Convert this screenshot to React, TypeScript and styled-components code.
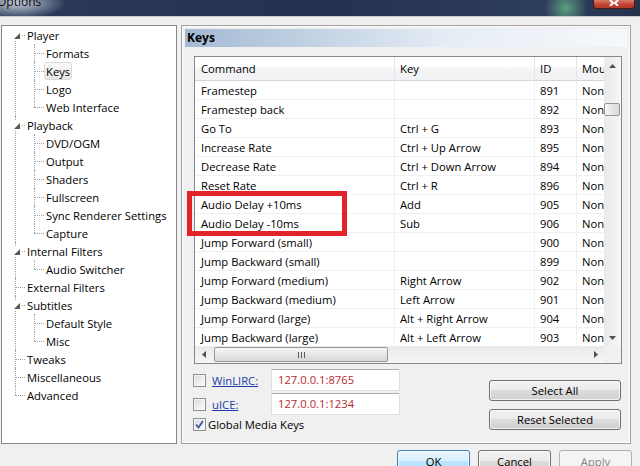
import React from "react";
import styled, { createGlobalStyle } from "styled-components";

// Win7 "Options" dialog, Keys page

const UI_FONT = `"Open Sans", "Noto Sans", sans-serif`;

const GlobalStyle = createGlobalStyle`
  html, body {
    margin: 0;
    padding: 0;
  }
  body {
    width: 640px;
    height: 466px;
    overflow: hidden;
    background: #f0f0f0;
    font-family: ${UI_FONT};
    font-size: 11.25px;
    color: #000;
  }
  * {
    box-sizing: border-box;
  }
`;

interface TreeNode {
  label: string;
  children?: TreeNode[];
  selected?: boolean;
}

const leaf = (label: string, selected = false): TreeNode => ({ label, selected });

const TREE: TreeNode[] = [
  { label: "Player", children: [leaf("Formats"), leaf("Keys", true), leaf("Logo"), leaf("Web Interface")] },
  {
    label: "Playback",
    children: [leaf("DVD/OGM"), leaf("Output"), leaf("Shaders"), leaf("Fullscreen"), leaf("Sync Renderer Settings"), leaf("Capture")],
  },
  { label: "Internal Filters", children: [leaf("Audio Switcher")] },
  leaf("External Filters"),
  { label: "Subtitles", children: [leaf("Default Style"), leaf("Misc")] },
  leaf("Tweaks"),
  leaf("Miscellaneous"),
  leaf("Advanced"),
];

const COLUMNS = [
  { title: "Command", width: 200 },
  { title: "Key", width: 140 },
  { title: "ID", width: 42 },
  { title: "Mouse Windowed", width: 110 },
];

const KEYS: [string, string, string][] = [
  ["Framestep", "", "891"],
  ["Framestep back", "", "892"],
  ["Go To", "Ctrl + G", "893"],
  ["Increase Rate", "Ctrl + Up Arrow", "895"],
  ["Decrease Rate", "Ctrl + Down Arrow", "894"],
  ["Reset Rate", "Ctrl + R", "896"],
  ["Audio Delay +10ms", "Add", "905"],
  ["Audio Delay -10ms", "Sub", "906"],
  ["Jump Forward (small)", "", "900"],
  ["Jump Backward (small)", "", "899"],
  ["Jump Forward (medium)", "Right Arrow", "902"],
  ["Jump Backward (medium)", "Left Arrow", "901"],
  ["Jump Forward (large)", "Alt + Right Arrow", "904"],
  ["Jump Backward (large)", "Alt + Left Arrow", "903"],
];

const Tree: React.FC<{ nodes: TreeNode[]; level: number }> = ({ nodes, level }) => (
  <TreeList>
    {nodes.map((node, i) => (
      <TreeItem
        key={node.label}
        $level={level}
        $first={level === 0 && i === 0}
        $last={i === nodes.length - 1}
      >
        <TreeRow $level={level}>
          {node.children && (
            <Expander $level={level}>
              <svg width="6" height="6" viewBox="0 0 6 6">
                <polygon points="6,0 6,6 0,6" fill="#595959" />
              </svg>
            </Expander>
          )}
          <TreeLabel $selected={node.selected}>{node.label}</TreeLabel>
        </TreeRow>
        {node.children && <Tree nodes={node.children} level={level + 1} />}
      </TreeItem>
    ))}
  </TreeList>
);

const Arrow: React.FC<{ dir: "up" | "down" | "left" | "right" }> = ({ dir }) => {
  const pts = {
    up: "0,4 7,4 3.5,0",
    down: "0,0 7,0 3.5,4",
    left: "4,0 4,7 0,3.5",
    right: "0,0 0,7 4,3.5",
  }[dir];
  const vertical = dir === "up" || dir === "down";
  return (
    <svg width={vertical ? 7 : 4} height={vertical ? 4 : 7} viewBox={vertical ? "0 0 7 4" : "0 0 4 7"}>
      <polygon points={pts} fill="#4f4f4f" />
    </svg>
  );
};

const Checkbox: React.FC<{ checked?: boolean }> = ({ checked }) => (
  <CheckBox>
    {checked && (
      <svg width="9" height="9" viewBox="0 0 9 9">
        <path d="M1 4.5 L3.5 7.5 L8 1" fill="none" stroke="#3f5794" strokeWidth="1.8" />
      </svg>
    )}
  </CheckBox>
);

const App: React.FC = () => {
  return (
    <Window>
      <GlobalStyle />
      <TitleBar>
        <TitleText>Options</TitleText>
        <CloseButton>
          <svg width="12" height="6" viewBox="0 0 12 6">
            <path d="M2 0 L5 3 L2 6 M10 0 L7 3 L10 6" fill="none" stroke="#fff" strokeWidth="2" />
          </svg>
        </CloseButton>
      </TitleBar>

      <Frame>
        <Main>
          <TreePanel>
            <Tree nodes={TREE} level={0} />
          </TreePanel>

          <Page>
            <PageHeader>Keys</PageHeader>
            <PageBody>
              <ListView>
                <ListContent>
                  <HeaderRow>
                    {COLUMNS.map((c, i) => (
                      <HeaderCell key={c.title} $width={c.width} $first={i === 0}>
                        {c.title}
                      </HeaderCell>
                    ))}
                  </HeaderRow>
                  {KEYS.map(([cmd, key, id]) => (
                    <Row key={id}>
                      <Cell $width={COLUMNS[0].width} $first>{cmd}</Cell>
                      <Cell $width={COLUMNS[1].width}>{key}</Cell>
                      <Cell $width={COLUMNS[2].width}>{id}</Cell>
                      <Cell $width={COLUMNS[3].width}>None</Cell>
                    </Row>
                  ))}
                </ListContent>

                <VScroll>
                  <ScrollButton><Arrow dir="up" /></ScrollButton>
                  <VTrack>
                    <VThumb />
                  </VTrack>
                  <ScrollButton><Arrow dir="down" /></ScrollButton>
                </VScroll>

                <HScroll>
                  <ScrollButton><Arrow dir="left" /></ScrollButton>
                  <HTrack>
                    <HThumb>
                      <svg width="7" height="6" viewBox="0 0 7 6">
                        <rect x="0" y="0" width="1" height="6" fill="#5a5a5a" />
                        <rect x="3" y="0" width="1" height="6" fill="#5a5a5a" />
                        <rect x="6" y="0" width="1" height="6" fill="#5a5a5a" />
                      </svg>
                    </HThumb>
                  </HTrack>
                  <ScrollButton><Arrow dir="right" /></ScrollButton>
                </HScroll>

                <ScrollCorner />
              </ListView>

              <Controls>
                <Options>
                  <FieldRow>
                    <Checkbox />
                    <LinkLabel>WinLIRC:</LinkLabel>
                    <AddressBox>127.0.0.1:8765</AddressBox>
                  </FieldRow>
                  <FieldRow>
                    <Checkbox />
                    <LinkLabel>uICE:</LinkLabel>
                    <AddressBox>127.0.0.1:1234</AddressBox>
                  </FieldRow>
                  <CheckRow>
                    <Checkbox checked />
                    <span>Global Media Keys</span>
                  </CheckRow>
                </Options>
                <SideButtons>
                  <PushButton $width={132} $height={21}>Select All</PushButton>
                  <PushButton $width={132} $height={21}>Reset Selected</PushButton>
                </SideButtons>
              </Controls>
            </PageBody>

            <Highlight />
          </Page>
        </Main>

        <DialogButtons>
          <PushButton $width={73} $height={23} $variant="default">OK</PushButton>
          <PushButton $width={73} $height={23}>Cancel</PushButton>
          <PushButton $width={73} $height={23} $variant="disabled">Apply</PushButton>
        </DialogButtons>
      </Frame>
    </Window>
  );
};

const Window = styled.div`
  width: 640px;
  height: 466px;
  display: flex;
  flex-direction: column;
  overflow: hidden;
`;

const TitleBar = styled.div`
  flex: none;
  height: 17px;
  display: flex;
  align-items: flex-start;
  justify-content: space-between;
  overflow: hidden;
  border-bottom: 1px solid #c3cad4;
  background:
    radial-gradient(ellipse 48px 16px at 18px 3px, rgba(214, 220, 230, 0.9), rgba(214, 220, 230, 0) 100%),
    radial-gradient(ellipse 22px 22px at 566px 8px, rgba(110, 190, 140, 0.75), rgba(110, 190, 140, 0) 100%),
    linear-gradient(to right, #2a3a58 0%, #24324f 50%, #2d3d5c 85%, #25334f 100%);
`;

const TitleText = styled.div`
  margin: -6px 0 0 -3px;
  font-size: 12px;
  line-height: 16px;
  color: #0b0b0b;
`;

const CloseButton = styled.div`
  width: 42px;
  height: 9px;
  margin-right: 5px;
  border: 1px solid #4a1a18;
  border-top: none;
  border-radius: 0 0 4px 4px;
  background: linear-gradient(to bottom, #d97a6a, #c2412f 60%, #b5382b);
  display: flex;
  justify-content: center;
  align-items: flex-start;
  overflow: hidden;
`;

const Frame = styled.div`
  flex: 1;
  display: flex;
  flex-direction: column;
  background: #f0f0f0;
`;

const Main = styled.div`
  display: flex;
  gap: 4px;
  padding: 8px 0 0 1px;
`;

const TreePanel = styled.div`
  width: 176px;
  height: 419px;
  border: 1px solid #828790;
  background: #fff;
  overflow: hidden;
`;

const TreeList = styled.ul`
  list-style: none;
  margin: 0;
  padding: 0;
`;

const TreeItem = styled.li<{ $level: number; $first: boolean; $last: boolean }>`
  position: relative;

  &::before {
    content: "";
    position: absolute;
    left: ${(p) => 13 + p.$level * 19}px;
    top: ${(p) => (p.$first ? "9px" : "0")};
    ${(p) => (p.$last ? "height: 9px;" : "bottom: 0;")}
    border-left: 1px dotted #a0a0a0;
  }

  &::after {
    content: "";
    position: absolute;
    left: ${(p) => 13 + p.$level * 19}px;
    top: 9px;
    width: 10px;
    border-top: 1px dotted #a0a0a0;
  }
`;

const TreeRow = styled.div<{ $level: number }>`
  position: relative;
  height: 18px;
  padding-left: ${(p) => 23 + p.$level * 19}px;
  display: flex;
  align-items: center;
`;

const Expander = styled.span<{ $level: number }>`
  position: absolute;
  z-index: 1;
  left: ${(p) => 9 + p.$level * 19}px;
  top: 4px;
  width: 11px;
  height: 11px;
  background: #fff;
  display: flex;
  align-items: center;
  justify-content: center;
`;

const TreeLabel = styled.span<{ $selected?: boolean }>`
  position: relative;
  z-index: 1;
  height: 18px;
  padding: 1px 1px 0;
  line-height: 15px;
  border: 1px solid ${(p) => (p.$selected ? "#d9d9d9" : "transparent")};
  border-radius: 3px;
  background: ${(p) => (p.$selected ? "linear-gradient(to bottom, #fafafa, #e8e8e8)" : "transparent")};
  white-space: nowrap;
`;

const Page = styled.div`
  position: relative;
  width: 450px;
  height: 419px;
  padding: 3px;
  border: 1px solid #a0a0a0;
  box-shadow: inset 0 0 0 1px #fcfcfc;
  background: #f0f0f0;
`;

const PageHeader = styled.div`
  height: 18px;
  padding-left: 2px;
  line-height: 18px;
  font-weight: 700;
  font-size: 12px;
  background: linear-gradient(to right, #a3b9d3 0%, #c3d3e4 30%, #e6edf5 60%, #f6f8fb 100%);
`;

const PageBody = styled.div`
  padding: 9px 5px 0 9px;
`;

const ListView = styled.div`
  height: 308px;
  border: 1px solid #828790;
  background: #fff;
  display: grid;
  grid-template-columns: 1fr 17px;
  grid-template-rows: 1fr 17px;
  overflow: hidden;
`;

const ListContent = styled.div`
  overflow: hidden;
  min-width: 0;
  min-height: 0;
`;

const HeaderRow = styled.div`
  display: flex;
  height: 24px;
  border-bottom: 1px solid #d5d5d5;
  background: linear-gradient(to bottom, #ffffff 0%, #ffffff 45%, #f4f5f7 46%, #f1f2f4 100%);
`;

const HeaderCell = styled.div<{ $width: number; $first?: boolean }>`
  flex: none;
  width: ${(p) => p.$width}px;
  padding: 1px 0 0 ${(p) => (p.$first ? 6 : 5)}px;
  line-height: 22px;
  border-right: 1px solid #e3e6ea;
  white-space: nowrap;
  overflow: hidden;
`;

const Row = styled.div`
  display: flex;
  height: 19px;
  border-bottom: 1px solid #f0f0f0;
`;

const Cell = styled.div<{ $width: number; $first?: boolean }>`
  flex: none;
  width: ${(p) => p.$width}px;
  padding: 1px 0 0 ${(p) => (p.$first ? 6 : 5)}px;
  line-height: 17px;
  border-right: 1px solid #f0f0f0;
  white-space: nowrap;
  overflow: hidden;
`;

const VScroll = styled.div`
  display: flex;
  flex-direction: column;
  background: linear-gradient(to right, #e9e9e9, #f6f6f6);
`;

const HScroll = styled.div`
  display: flex;
  background: linear-gradient(to bottom, #e9e9e9, #f6f6f6);
`;

const ScrollButton = styled.div`
  flex: none;
  width: 17px;
  height: 17px;
  display: flex;
  align-items: center;
  justify-content: center;
`;

const VTrack = styled.div`
  flex: 1;
  padding: 29px 0 0 0;
`;

const VThumb = styled.div`
  width: 16px;
  height: 13px;
  border: 1px solid #979797;
  border-radius: 2px;
  background: linear-gradient(to right, #f7f7f7, #e6e6e6 50%, #dcdcdc);
`;

const HTrack = styled.div`
  flex: 1;
  padding: 1px 0 0 2px;
`;

const HThumb = styled.div`
  width: 174px;
  height: 15px;
  border: 1px solid #979797;
  border-radius: 2px;
  background: linear-gradient(to bottom, #f7f7f7, #e6e6e6 50%, #d8d8d8);
  display: flex;
  align-items: center;
  justify-content: center;
`;

const ScrollCorner = styled.div`
  background: #f0f0f0;
`;

const Controls = styled.div`
  margin-top: 5px;
  display: flex;
  justify-content: space-between;
  align-items: flex-start;
`;

const Options = styled.div`
  display: flex;
  flex-direction: column;
  gap: 2px;
  margin-left: -1px;
`;

const FieldRow = styled.div`
  display: flex;
  align-items: center;
  height: 22px;
`;

const CheckRow = styled.div`
  display: flex;
  align-items: center;
  gap: 2px;
  height: 17px;
  margin-top: -1px;
`;

const CheckBox = styled.span`
  flex: none;
  width: 13px;
  height: 13px;
  border: 1px solid #8e8f8f;
  background: linear-gradient(135deg, #d6d8dc 0%, #f0f0f0 60%, #fbfbfb 100%);
  box-shadow: inset 0 0 0 1px #f6f6f6;
  display: flex;
  align-items: center;
  justify-content: center;
`;

const LinkLabel = styled.span`
  width: 59px;
  margin-left: 6px;
  color: #1a3aa8;
  text-decoration: underline;
`;

const AddressBox = styled.div`
  width: 129px;
  height: 22px;
  padding-left: 6px;
  line-height: 20px;
  border: 1px solid #dbdfe6;
  border-top-color: #abadb3;
  border-radius: 2px;
  background: #fff;
  color: #b8282e;
`;

const SideButtons = styled.div`
  margin-top: 11px;
  display: flex;
  flex-direction: column;
  gap: 8px;
  margin-right: 1px;
`;

const PushButton = styled.div<{ $width: number; $height: number; $variant?: "default" | "disabled" }>`
  flex: none;
  width: ${(p) => p.$width}px;
  height: ${(p) => p.$height}px;
  line-height: ${(p) => p.$height - 2}px;
  text-align: center;
  border-radius: 3px;
  border: 1px solid
    ${(p) => (p.$variant === "default" ? "#3c7fb1" : p.$variant === "disabled" ? "#adb2b5" : "#707070")};
  color: ${(p) => (p.$variant === "disabled" ? "#838383" : "#000")};
  background: ${(p) =>
    p.$variant === "default"
      ? "linear-gradient(to bottom, #eaf6fd 0%, #d9f0fc 45%, #bee6fd 50%, #a7d9f5 100%)"
      : p.$variant === "disabled"
      ? "#f4f4f4"
      : "linear-gradient(to bottom, #f2f2f2 0%, #ebebeb 45%, #dddddd 50%, #cfcfcf 100%)"};
  box-shadow: inset 0 0 0 1px ${(p) => (p.$variant === "disabled" ? "#f4f4f4" : "rgba(255,255,255,0.7)")};
`;

const DialogButtons = styled.div`
  display: flex;
  justify-content: flex-end;
  gap: 8px;
  padding-right: 8px;
  margin-top: 6px;
`;

const Highlight = styled.div`
  position: absolute;
  left: 5px;
  top: 165px;
  width: 160px;
  height: 45px;
  border: 5px solid #e3222a;
  pointer-events: none;
`;

export default App;
